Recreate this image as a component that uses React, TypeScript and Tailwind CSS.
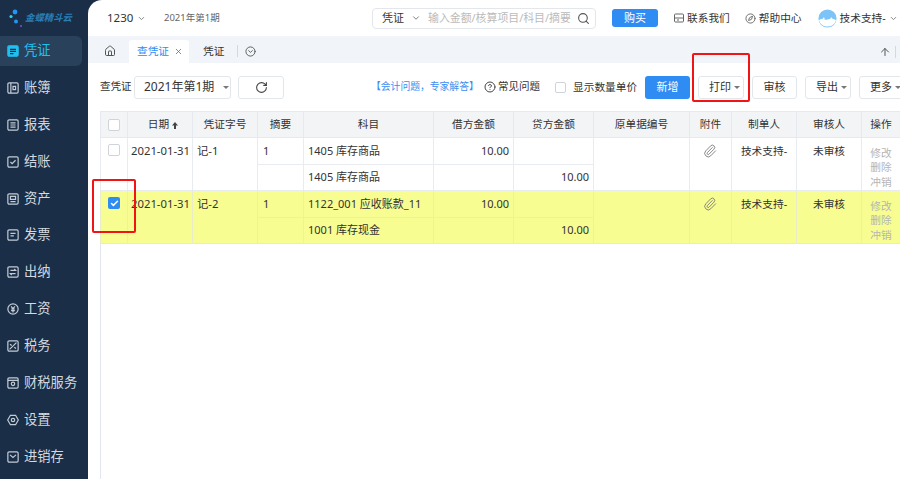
import React from "react";
import { ChevronDown, Search, House, RotateCw, Paperclip, CircleHelp, Compass, ArrowUp, CircleChevronDown, X, Check } from "lucide-react";

const Icon = ({ d, active, outline }: { d: string; active?: boolean; outline?: string }) => (
  <svg width="12" height="12" viewBox="0 0 14 14" fill={active ? "#1fc0ee" : "none"} stroke={active ? "#1fc0ee" : "#c3ccd6"} strokeWidth="1.4" className="shrink-0">
    {outline ? <path d={outline} /> : <rect x="1" y="1" width="12" height="12" rx="1.5" />}
    <path d={d} stroke={active ? "#1a2e47" : "#c3ccd6"} fill="none" />
  </svg>
);

const menus = [
  { name: "凭证", d: "M3.5 5h7M3.5 7.5h7M3.5 10h4", active: true },
  { name: "账簿", d: "M4.5 1v12M7 5h3v4H7z" },
  { name: "报表", d: "M4 4.5h6M4 7h6M4 9.5h6" },
  { name: "结账", d: "M4 7l2 2 4-4" },
  { name: "资产", d: "M4 4h6v3.5H4zM4 10h6" },
  { name: "发票", d: "M4 5h6M4 8h4" },
  { name: "出纳", d: "M4 5h6L8.5 3.5M10 9H4l1.5 1.5" },
  { name: "工资", d: "M4.8 3.8L7 6.5l2.2-2.7M4.8 7h4.4M4.8 9h4.4M7 6.5v4.5", outline: "M7 1a6 6 0 1 0 0 12A6 6 0 1 0 7 1z" },
  { name: "税务", d: "M3 11l8-8M3.5 5l2 1.5M8.5 8.5l2 1.5" },
  { name: "财税服务", d: "M1 4h12M5 8a2 2 0 1 0 4 0 2 2 0 1 0-4 0" },
  { name: "设置", d: "M5 7a2 2 0 1 0 4 0 2 2 0 1 0-4 0", outline: "M4 1.5h6L13.2 7 10 12.5H4L.8 7z" },
  { name: "进销存", d: "M3.5 4.5L7 7.5l3.5-3" },
];

const Btn = ({ label, caret, w }: { label: string; caret?: boolean; w: string }) => (
  <div className={`h-[23px] ${w} shrink-0 border border-[#e3e7ec] rounded-[3px] flex items-center gap-[3px] text-[11px] text-[#333] whitespace-nowrap ${caret ? "pl-[10px]" : "justify-center"}`}>
    {label}
    {caret && <span className="w-0 h-0 border-x-[3px] border-x-transparent border-t-[3px] border-t-[#777]" />}
  </div>
);

const Box = ({ checked }: { checked?: boolean }) =>
  checked ? (
    <span className="w-[12px] h-[12px] rounded-[2px] bg-[#2f8cf3] flex items-center justify-center ml-[7px]">
      <Check size={9} color="#fff" strokeWidth={4} />
    </span>
  ) : (
    <span className="block w-[12px] h-[12px] rounded-[2px] border border-[#cfd4da] bg-white ml-[7px]" />
  );

const heads = ["", "日期", "凭证字号", "摘要", "科目", "借方金额", "贷方金额", "原单据编号", "附件", "制单人", "审核人", "操作"];
const widths = [27, 65, 65, 46, 130, 80, 80, 96, 42, 65, 65, 39];

const rows = [
  { no: "记-1", lines: [["1405 库存商品", "10.00", ""], ["1405 库存商品", "", "10.00"]] },
  { no: "记-2", checked: true, lines: [["1122_001 应收账款_11", "10.00", ""], ["1001 库存现金", "", "10.00"]] },
];

export default function App() {
  return (
    <div className="w-[900px] h-[479px] overflow-hidden flex bg-[#1a2e47] text-[#333] text-[11px] relative" style={{ fontFamily: '"Noto Sans", "Noto Sans CJK SC", sans-serif' }}>
      {/* side menu */}
      <div className="w-[88px] shrink-0 flex flex-col">
        <div className="h-[36px] flex items-center pl-[9px] gap-[2px]">
          <svg width="14" height="24" viewBox="0 0 14 24" className="shrink-0 overflow-visible">
            <circle cx="6" cy="6" r="2.4" fill="#2196f3" />
            <circle cx="2" cy="10.5" r="1.6" fill="#2fd0ee" />
            <circle cx="7" cy="15.5" r="2" fill="#2196f3" />
            <circle cx="12" cy="20" r="1" fill="#7b4fd0" />
          </svg>
          <span className="text-[9.4px] italic text-[#2a7fb8] font-bold whitespace-nowrap">金蝶精斗云</span>
        </div>
        <div className="flex flex-col gap-[6.9px]">
          {menus.map((m) => (
            <div key={m.name} className={`h-[30px] w-[82px] flex items-center gap-[5px] pl-[7px] rounded-r-[6px] text-[13.3px] whitespace-nowrap ${m.active ? "bg-[#2a415c] text-[#1fc0ee]" : "text-[#d3d9e0]"}`}>
              <Icon d={m.d} active={m.active} outline={m.outline} />
              {m.name}
            </div>
          ))}
        </div>
      </div>

      {/* main */}
      <div className="flex-1 min-w-0 bg-white rounded-tl-[14px] flex flex-col overflow-hidden">
        <div className="h-[36px] shrink-0 flex items-center pl-[19px]">
          <span className="text-[11.5px] w-[26px]">1230</span>
          <ChevronDown size={9} className="ml-[4px] text-[#666] shrink-0" />
          <span className="ml-[18px] text-[9.5px] text-[#666] whitespace-nowrap w-[55px]">2021年第1期</span>
          <div className="ml-[153px] w-[224px] h-[21px] shrink-0 border border-[#e3e7ec] rounded-[4px] flex items-center pl-[9px] pr-[5px]">
            <span className="text-[11px]">凭证</span>
            <ChevronDown size={10} className="ml-[7px] text-[#666] shrink-0" />
            <span className="ml-[7px] text-[10.9px] text-[#bbb] whitespace-nowrap">输入金额/核算项目/科目/摘要</span>
            <Search size={13} className="ml-auto text-[#555] shrink-0" />
          </div>
          <div className="ml-[16px] w-[46px] h-[18px] shrink-0 bg-[#2f8cf3] rounded-[3px] text-white text-[11px] flex items-center justify-center">购买</div>
          <svg width="12" height="12" viewBox="0 0 12 12" fill="none" stroke="#666" className="ml-[15px] shrink-0"><rect x="1.5" y="2" width="9" height="8" rx="1" /><path d="M1.5 6h9M4 8h2" /></svg>
          <span className="ml-[2px] text-[10.7px] whitespace-nowrap">联系我们</span>
          <Compass size={11} className="ml-[15px] text-[#666] shrink-0" />
          <span className="ml-[3px] text-[10.7px] whitespace-nowrap">帮助中心</span>
          <svg width="19" height="19" viewBox="0 0 20 20" className="ml-[16px] shrink-0">
            <circle cx="10" cy="10" r="9.5" fill="#7cc4f7" />
            <path d="M1 12c3-3 5 0 9-1s6-1 9 1a9.5 9.5 0 0 1-18 0z" fill="#fff" />
            <circle cx="6" cy="10" r="1" fill="#fff" />
            <circle cx="14" cy="10" r="1" fill="#fff" />
          </svg>
          <span className="ml-[3px] text-[10.7px] whitespace-nowrap">技术支持-</span>
          <ChevronDown size={9} className="ml-[3px] text-[#666] shrink-0" />
        </div>

        <div className="h-[27px] shrink-0 bg-[#f1f4f8] flex items-end pl-[16px]">
          <House size={12} className="mb-[6px] text-[#555] shrink-0" />
          <div className="ml-[13px] w-[60px] h-[23px] bg-white rounded-t-[3px] flex items-center justify-center gap-[5px] pl-[2px] text-[#2f8cf3] text-[10.7px] shrink-0">
            查凭证
            <X size={9} className="text-[#666]" />
          </div>
          <span className="ml-[14px] mb-[4px] text-[10.7px]">凭证</span>
          <span className="ml-[13px] mb-[6px] h-[12px] border-l border-[#d5d9de]" />
          <CircleChevronDown size={11} className="ml-[7px] mb-[6px] text-[#555] shrink-0" />
          <div className="ml-auto mr-[4px] mb-[5px] flex items-center gap-[4px]">
            <ArrowUp size={12} className="text-[#555]" />
            <span className="h-[12px] border-l border-[#d5d9de]" />
          </div>
        </div>

        <div className="h-[48px] shrink-0 flex items-center pl-[12px]">
          <span className="text-[10.5px] w-[32px] whitespace-nowrap shrink-0">查凭证</span>
          <div className="ml-[2px] w-[97px] h-[23px] shrink-0 border border-[#e3e7ec] rounded-[3px] flex items-center pl-[9px] text-[12px] whitespace-nowrap">
            2021年第1期
            <span className="ml-[9px] w-0 h-0 border-x-[3px] border-x-transparent border-t-[3px] border-t-[#777]" />
          </div>
          <div className="ml-[7px] w-[46px] h-[23px] shrink-0 border border-[#e3e7ec] rounded-[3px] flex items-center justify-center">
            <RotateCw size={13} className="text-[#444]" />
          </div>
          <span className="ml-[87px] w-[101px] shrink-0 text-[9.8px] text-[#3b8df0] whitespace-nowrap">【会计问题，专家解答】</span>
          <CircleHelp size={12} className="ml-[12px] text-[#444] shrink-0" />
          <span className="ml-[2px] w-[42px] shrink-0 text-[10.5px] whitespace-nowrap">常见问题</span>
          <span className="ml-[15px] w-[11px] h-[11px] border border-[#cfd4da] rounded-[2px] shrink-0" />
          <span className="ml-[7px] w-[64px] shrink-0 text-[10.7px] whitespace-nowrap">显示数量单价</span>
          <div className="ml-[8px] w-[45px] h-[23px] shrink-0 bg-[#2f8cf3] rounded-[3px] text-white text-[11px] flex items-center justify-center">新增</div>
          <div className="ml-[8px] flex gap-[8px]">
            <Btn label="打印" caret w="w-[46px]" />
            <Btn label="审核" w="w-[45px]" />
            <Btn label="导出" caret w="w-[46px]" />
            <Btn label="更多" caret w="w-[46px]" />
          </div>
        </div>

        <div className="ml-[12px] w-[800px] flex-1 border-l border-[#e3e6ed]">
          <table className="table-fixed border-collapse w-[800px] -ml-px">
            <colgroup>
              {widths.map((w, i) => (
                <col key={i} style={{ width: w }} />
              ))}
            </colgroup>
            <thead>
              <tr className="h-[26px] bg-[#f3f4f5]">
                {heads.map((h, i) => (
                  <th key={i} className={`border border-[#e6e9ef] font-normal text-[10.7px] text-center whitespace-nowrap ${i === 1 ? "pl-[6px]" : ""}`}>
                    {i === 0 ? <Box /> : h}
                    {i === 1 && (
                      <svg width="6" height="7" viewBox="0 0 6 7" className="inline ml-[3px] mb-[1px]" fill="#444">
                        <path d="M3 0l3 3.4H4V7H2V3.4H0z" />
                      </svg>
                    )}
                  </th>
                ))}
              </tr>
            </thead>
            <tbody>
              {rows.map((r) => {
                const bg = r.checked ? "bg-[#f8fd91]" : "bg-white";
                const line = r.checked ? "border border-[#e9ecc8]" : "border border-[#e8ebf0]";
                const top = `${line} align-top pt-[5px]`;
                return (
                  <React.Fragment key={r.no}>
                    <tr className={`h-[27px] ${bg}`}>
                      <td rowSpan={2} className={`${line} align-top pt-[6px]`}><Box checked={r.checked} /></td>
                      <td rowSpan={2} className={`${top} pl-[3px] text-[11.3px] whitespace-nowrap`}>2021-01-31</td>
                      <td rowSpan={2} className={`${top} pl-[4px] text-[11.3px]`}>{r.no}</td>
                      <td className={`${line} pl-[5px]`}>1</td>
                      <td className={`${line} pl-[4px] whitespace-nowrap`}>{r.lines[0][0]}</td>
                      <td className={`${line} pr-[4px] text-right`}>{r.lines[0][1]}</td>
                      <td className={`${line} pr-[4px] text-right`}>{r.lines[0][2]}</td>
                      <td rowSpan={2} className={line} />
                      <td rowSpan={2} className={`${line} align-top pt-[4px] pr-[1px] text-center`}><Paperclip size={14} strokeWidth={1.5} className="inline text-[#777]" /></td>
                      <td rowSpan={2} className={`${top} text-center text-[10.7px] whitespace-nowrap`}>技术支持-</td>
                      <td rowSpan={2} className={`${top} text-center text-[10.7px]`}>未审核</td>
                      <td rowSpan={2} className={`${line} pt-[7px] text-center text-[10.7px] leading-[14.5px] text-[#b5b5b5]`}>修改<br />删除<br />冲销</td>
                    </tr>
                    <tr className={`h-[26px] ${bg}`}>
                      <td className={line} />
                      <td className={`${line} pl-[4px] whitespace-nowrap`}>{r.lines[1][0]}</td>
                      <td className={`${line} pr-[4px] text-right`}>{r.lines[1][1]}</td>
                      <td className={`${line} pr-[4px] text-right`}>{r.lines[1][2]}</td>
                    </tr>
                  </React.Fragment>
                );
              })}
            </tbody>
          </table>
        </div>
      </div>

      {/* red annotation boxes drawn over the screenshot */}
      <div className="absolute left-[692px] top-[53px] w-[58px] h-[49px] border-2 border-[#f01414] rounded-[2px] pointer-events-none" />
      <div className="absolute left-[92px] top-[179px] w-[44px] h-[54px] border-2 border-[#f01414] rounded-[2px] pointer-events-none" />
    </div>
  );
}
